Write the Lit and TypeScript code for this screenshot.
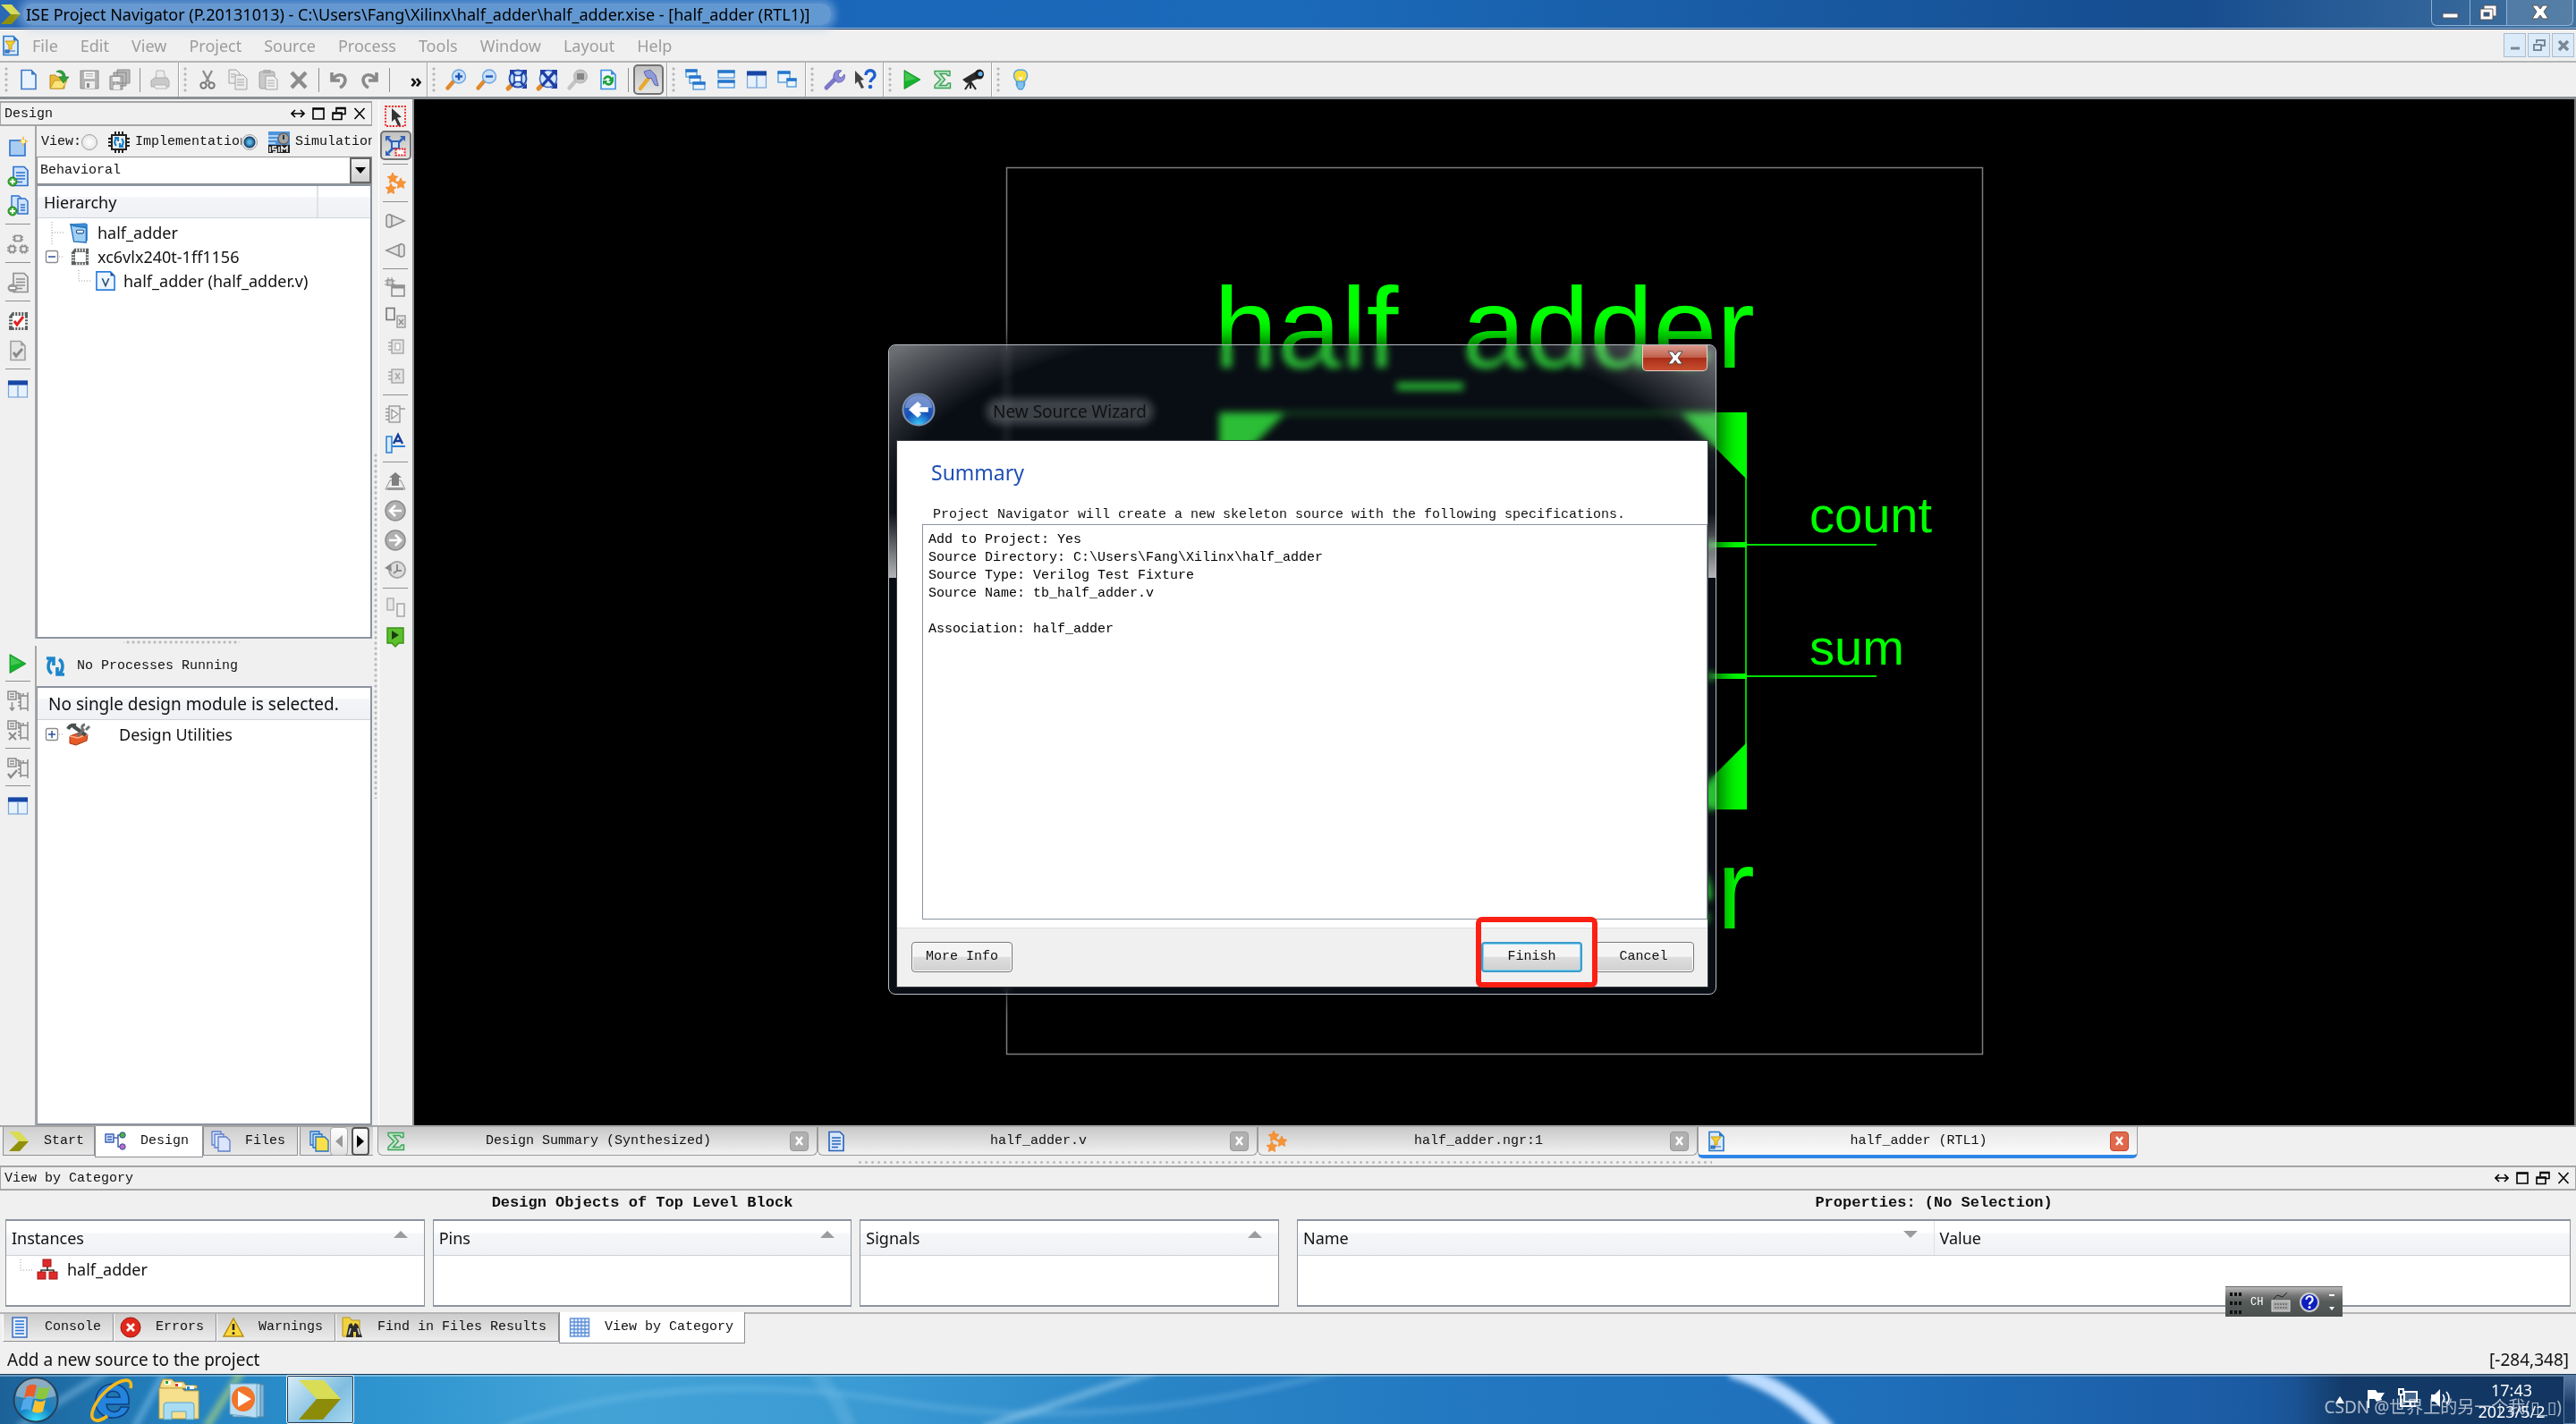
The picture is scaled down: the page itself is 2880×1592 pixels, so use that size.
import { LitElement, html, css, svg, nothing, TemplateResult } from "lit";
import { customElement, property } from "lit/decorators.js";
import { classMap } from "lit/directives/class-map.js";

/* ---------- icon set, drawn on a 24 x 24 grid ---------- */

const page = (stroke: string, fill: string) => svg`
  <path d="M4 1.5h11l5 5v16H4z" fill=${fill} stroke=${stroke} stroke-width="1.6"/>
  <path d="M15 1.5l5 5h-5z" fill=${stroke}/>`;

const lens = (mark: unknown, rim = "#6aa5e4", handle = "#e08a2c", glass = "#c9e0f8") => svg`
  <path d="M2.5 21.5L9 14" stroke=${handle} stroke-width="4.4" stroke-linecap="round"/>
  <circle cx="15" cy="8.5" r="7.5" fill=${glass} stroke=${rim} stroke-width="1.4"/>${mark}`;

const star = (x: number, y: number) => svg`
  <path transform="translate(${x} ${y})" d="M0-6l1.7 3.800 4.200.5-3 2.900.7 4.200L0 3.500-3.600 5.500l.7-4.200L-6-1.500l4.200-.5z" fill="#f79433" stroke="#f0862a" stroke-width=".8"/>`;

const sigma = svg`<path d="M3 2.500h17v5h-2.500L16 5.500H9l5.500 6.500L8.500 18.500H16l2-2.500h2.500v5.500H3v-3L9.500 12 3 5.500z" fill="#bfe6c8" stroke="#3da35a" stroke-width="1.4"/>`;

const chipGrey = svg`
  <g fill="none" stroke="#8a8a8a" stroke-width="1.6">
    <rect x="8.5" y="2.5" width="7" height="6"/><rect x="2.5" y="14.5" width="6" height="6"/><rect x="15.5" y="14.5" width="6" height="6"/>
    <path d="M6 4h2.500M6 7h2.500M15.500 4H18M15.500 7H18M0 16h2.500M0 19h2.500M8.500 16h2M8.500 19h2M13.500 16h2M13.500 19h2M21.500 16H24M21.500 19H24M4 12.500v2M7 12.500v2M17 12.500v2M20 12.500v2M4 20.500v2M7 20.500v2M17 20.500v2M20 20.500v2"/>
  </g>`;

const chipBody = svg`
  <path d="M6 2h17v20H2V7z" fill="#5a5f5f"/>
  <path d="M8.500 2v4M12 2v4M15.500 2v4M19 2v4M8.500 22v-3M12 22v-3M15.500 22v-3M19 22v-3M2 9.500h4M2 13h4M2 16.500h4M23 9.500h-3M23 13h-3M23 16.500h-3" stroke="#fff" stroke-width="1.4"/>`;

const procBlock = (mark: unknown) => svg`
  <g fill="#eee" stroke="#8a8a8a" stroke-width="1.5">
    <rect x="1" y="1" width="9" height="9"/><path d="M3 4h5M3 7h5M10 3h3v6M15 3v19M15 6h8v14h-8zM12 9h3M12 13h3M12 17h3M18 6V3M23 6V2M23 20v3"/>
    ${mark}
  </g>`;

const columns = svg`
  <rect x="1.5" y="3" width="21" height="18" fill="#e6f1fc" stroke="#79a7d8" stroke-width="1.2"/>
  <rect x="1" y="2.5" width="22" height="5" fill="#1747a6"/><path d="M12 7v14" stroke="#79a7d8" stroke-width="1.5"/>`;

const docLines = (c: string, f: string) => svg`
  <path d="M4 1.500h12l4 4v17H4z" fill=${f} stroke=${c} stroke-width="1.6"/>
  <path d="M7 8h10M7 11.500h10M7 15h10M7 18.500h7" stroke=${c} stroke-width="1.7"/>`;

const schematic = svg`
  ${page("#2a78c8", "#dbeafa")}
  <path d="M6 7h11l-4 5v4h-3v-4z" fill="#f4cf2e" stroke="#c89b12" stroke-width="1"/>
  <path d="M6 17h4v3H6zM13 18h4M10 18h3" fill="#3c87d6" stroke="#2a66b0" stroke-width="1.2"/>`;

const brand = svg`<path d="M1 1h12l10 11H12z" fill="#d9dc55"/><path d="M1 23h12l10-11H12z" fill="#8f9009"/>`;

const disk = svg`
  <path d="M2 2h20v20H2z" fill="#b3b3b3" stroke="#8b8b8b"/><rect x="6" y="3" width="12" height="8" fill="#f2f2f2"/>
  <path d="M8 5.500h8M8 8h8" stroke="#aaa"/><rect x="7" y="14" width="11" height="8" fill="#ededed"/><rect x="9" y="16" width="3" height="5" fill="#8b8b8b"/>`;

const windowPane = (x: number, y: number, w: number, h: number) => svg`
  <rect x=${x} y=${y} width=${w} height=${h} fill="#eaf4fd" stroke="#3f8fd8" stroke-width="1.2"/>
  <rect x=${x - 0.6} y=${y - 0.6} width=${w + 1.2} height="3.4" fill="#2676cc"/>`;

const gate = (flip: boolean) => svg`
  <g transform=${flip ? "translate(24 0) scale(-1 1)" : ""} fill="#e4e4e4" stroke="#8f8f8f" stroke-width="1.6">
    <path d="M6 5l16 7-16 7z"/><rect x="2" y="5" width="6" height="14" rx="3"/>
  </g>`;

const roundArrow = (d: string) => svg`
  <circle cx="12" cy="12" r="11" fill="#b0b0b0" stroke="#8c8c8c" stroke-width="1.5"/>
  <path d=${d} fill="none" stroke="#fff" stroke-width="2.6"/>`;

const icons: Record<string, unknown> = {
  brand,
  newDoc: page("#3c78c8", "#e9f3fe"),
  open: svg`<path d="M2 7h6l2 2h8v13H2z" fill="#e9b93a" stroke="#b98a1c"/><path d="M2 22l5-9h14l-5 9z" fill="#fbe37a" stroke="#c79a24"/>
    <path d="M9 3c5-3 10 0 10 6h4l-6 7-5-7h4c0-4-3-5-7-6z" fill="#2fa33a" stroke="#1d7a28" stroke-width=".7"/>`,
  save: disk,
  saveAll: svg`<path d="M9 1h14v15H9zM5 4h14v15H5zM1 8h14v15H1z" fill="#b9b9b9" stroke="#888"/><path d="M4 9h8v5H4z" fill="#eee"/><path d="M5 18h7v5H5z" fill="#eee"/>`,
  print: svg`<path d="M8 2h8l2 9H7z" fill="#ececec" stroke="#b5b5b5"/><path d="M2 13l4-3h14l2 4v6H2z" fill="#c9c9c9" stroke="#adadad"/><path d="M5 18h13l2 4H7z" fill="#efefef" stroke="#b5b5b5"/>`,
  cut: svg`<path d="M7 2l7 13M17 2l-7 13" stroke="#8e8e8e" stroke-width="2.4"/><circle cx="7.5" cy="18.5" r="3.2" fill="none" stroke="#777" stroke-width="2"/><circle cx="16.5" cy="18.5" r="3.2" fill="none" stroke="#777" stroke-width="2"/>`,
  copy: svg`<path d="M2 1h8l4 4v11H2z" fill="#ededed" stroke="#a2a2a2"/><path d="M9 7h9l4 4v12H9z" fill="#ededed" stroke="#a2a2a2"/><path d="M11 12h8M11 15h8M11 18h8M4 6h5M4 9h4" stroke="#a2a2a2"/>`,
  paste: svg`<rect x="2" y="3" width="17" height="19" rx="2" fill="#c9c9c9" stroke="#a2a2a2"/><rect x="6" y="1" width="9" height="4" rx="1" fill="#b0b0b0"/><path d="M9 8h9l4 4v11H9z" fill="#f0f0f0" stroke="#a2a2a2"/><path d="M11 13h8M11 16h8M11 19h8" stroke="#aaa"/>`,
  del: svg`<path d="M4 4l16 17M20 4L4 21" stroke="#8c8c8c" stroke-width="4.4"/>`,
  undo: svg`<path d="M4 4v9h9M5 12c5-8 13-6 14 0 0 4-2 7-6 9" fill="none" stroke="#8a8a8a" stroke-width="3.6"/>`,
  redo: svg`<path d="M20 4v9h-9M19 12c-5-8-13-6-14 0 0 4 2 7 6 9" fill="none" stroke="#8a8a8a" stroke-width="3.6"/>`,
  zoomIn: lens(svg`<path d="M11 8.500h8M15 4.500v8" stroke="#1d55b8" stroke-width="2.4"/>`),
  zoomOut: lens(svg`<path d="M11 8.500h8" stroke="#1d55b8" stroke-width="2.4"/>`),
  zoomFit: svg`<path d="M2 22l5-5" stroke="#e08a2c" stroke-width="5" stroke-linecap="round"/><circle cx="13" cy="11" r="9.500" fill="#bcd8f6" stroke="#2b4fb0" stroke-width="2"/>
    <path d="M6 3l14 16M20 3L6 19" stroke="#1d3fa8" stroke-width="2.6"/><rect x="9" y="7.500" width="8" height="7" fill="#fff" stroke="#1d4bb0" stroke-width="1.600"/><path d="M4 1h6L4 7zM23 1h-6l6 6zM23 22h-6l6-6z" fill="#1d3fa8"/>`,
  zoomSel: svg`<path d="M2 22l5-5" stroke="#e08a2c" stroke-width="5" stroke-linecap="round"/><circle cx="13" cy="11" r="9.500" fill="#d4e6fa" stroke="#3c68c0" stroke-width="1.600"/>
    <path d="M6 3l14 16M20 3L6 19" stroke="#1d3fa8" stroke-width="3.400"/><path d="M4 1h7L4 8zM23 1h-7l7 7zM23 22h-7l7-7z" fill="#1d3fa8"/>`,
  zoomGrey: svg`<path d="M2.500 21.500L9 14" stroke="#c4c4c4" stroke-width="4.400" stroke-linecap="round"/><circle cx="15" cy="8.500" r="7.500" fill="#c4c4c4" stroke="#b0b0b0"/><rect x="11" y="5" width="8" height="7" fill="#858585"/>`,
  refresh: svg`${page("#3c8fe0", "#eef6fe")}<path d="M6 12c2-6 8-6 10-2l2-2v6h-6l2-2c-2-3-4-2-5 0zM18 14c-2 6-8 6-10 2l-2 2v-5h5l-1 2c2 2 4 1 5-1z" fill="#1fa33a"/>`,
  hammer: svg`<path d="M3 22L13 9" stroke="#e8a92a" stroke-width="4.400" stroke-linecap="round"/><path d="M7 3l7-2 6 6 3 12-4-1-4-8-3 1-3-3z" fill="#8e9bd8" stroke="#5c66a8"/>`,
  cascade: svg`${windowPane(1, 1, 12, 8)}${windowPane(5, 8, 12, 8)}${windowPane(9, 15, 13, 8)}`,
  tileH: svg`${windowPane(3, 2, 18, 8)}${windowPane(3, 13, 18, 8)}`,
  tileV: columns,
  floatWin: svg`${windowPane(2, 3, 13, 12)}${windowPane(12, 11, 10, 9)}`,
  wrench: svg`<path d="M3 21l10-10" stroke="#7b78c8" stroke-width="5" stroke-linecap="round"/><path d="M11 10c-1-6 4-10 9-8l-4 4 1 3 3 1 3-4c2 6-3 10-8 9z" fill="#8f8cd8" stroke="#5d5ab0" stroke-width=".8"/>`,
  help: svg`<path d="M1 2l10 10-4 1 4 8-3 1-4-8-3 3z" fill="#444"/><path d="M13 7c0-7 10-7 10 0 0 4-5 4-5 8" fill="none" stroke="#1d5fd0" stroke-width="3.400"/><circle cx="18" cy="20" r="2.300" fill="#1d5fd0"/>`,
  play: svg`<path d="M3 1.500l18 10.500L3 22.500z" fill="#16b32c" stroke="#0d8a1e" stroke-width=".8"/><path d="M4 3.500l12 7.500-12 3z" fill="#6fdc7a" opacity=".5"/>`,
  sigma,
  telescope: svg`<path d="M0 12L15 3l5 7-15 6z" fill="#2a2a2a"/><ellipse cx="19" cy="6" rx="5" ry="5.500" fill="#1c1c1c"/><circle cx="20" cy="5.500" r="2.600" fill="#62b5e8"/><path d="M9 13v9M9 14L3 23M9 14l6 9" stroke="#2a2a2a" stroke-width="2.200"/>`,
  bulb: svg`<path d="M12 1c9 0 9 8 4.500 13v4h-9v-4C3 9 3 1 12 1z" fill="#fbdd3c" stroke="#5aa7e0" stroke-width="1.500"/><path d="M8 14h8v6l-2 3h-4l-2-3z" fill="#7fc2ee" stroke="#3f8fd0"/><path d="M10 9l2 3 2-3" fill="none" stroke="#fff" stroke-width="1.500"/>`,
  newSource: svg`<rect x="3" y="5" width="17" height="17" fill="#a8cdf3" stroke="#2f74cf" stroke-width="1.600"/><path d="M18 0l1.500 4.500L24 6l-4.500 1.500L18 12l-1.500-4.500L12 6l4.500-1.500z" fill="#f7a928"/><circle cx="18" cy="6" r="2.500" fill="#fff2a0"/>`,
  addSource: svg`<g transform="translate(3 0)">${docLines("#2a70cf", "#cfe3fa")}</g><circle cx="6" cy="18" r="5" fill="#3fae3a" stroke="#277e24"/><path d="M3 18h6M6 15v6" stroke="#fff" stroke-width="2"/>`,
  addCopy: svg`<path d="M5 1h8l3 3v14H5z" fill="#cfe3fa" stroke="#2a70cf" stroke-width="1.400"/><path d="M12 4h8l3 3v14H12z" fill="#cfe3fa" stroke="#2a70cf" stroke-width="1.400"/><path d="M15 11h5M15 14h5M15 17h5" stroke="#2a70cf" stroke-width="1.500"/><circle cx="6" cy="18" r="5" fill="#3fae3a" stroke="#277e24"/><path d="M3 18h6M6 15v6" stroke="#fff" stroke-width="2"/>`,
  chipGrey,
  removeSource: svg`<g transform="translate(3 0)">${docLines("#8e8e8e", "#e9e9e9")}</g><ellipse cx="6" cy="18" rx="5.500" ry="4.500" fill="#9a9a9a"/><path d="M3 18h6" stroke="#fff" stroke-width="2"/>`,
  chipCheck: svg`${chipBody}<rect x="6" y="6" width="14" height="13" fill="#fff"/><path d="M8 12l3 4 7-9" fill="none" stroke="#e02222" stroke-width="3"/>`,
  chip: svg`${chipBody}<rect x="6.500" y="6.500" width="13" height="12" fill="#fff"/>`,
  docCheck: svg`${page("#a0a0a0", "#e6e6e6")}<path d="M7 14l3 4 7-8" fill="none" stroke="#8a8a8a" stroke-width="3"/>`,
  columns,
  procRun: procBlock(svg`<path d="M5.500 13v9M3 19l2.500 3L8 19" fill="none"/>`),
  procStop: procBlock(svg`<path d="M2 14l8 8M10 14l-8 8" fill="none" stroke-width="2"/>`),
  procCheck: procBlock(svg`<path d="M1 18l3 4 7-8" fill="none" stroke-width="2.400"/>`),
  chipCycle: svg`<rect x="4" y="4" width="16" height="16" fill="#f2f2f2" stroke="#222" stroke-width="2"/><path d="M8 0v4M12 0v4M16 0v4M8 20v4M12 20v4M16 20v4M0 8h4M0 12h4M0 16h4M20 8h4M20 12h4M20 16h4" stroke="#222" stroke-width="2"/><path d="M11 7c-4 1-5 6-2 9M13 17c4-1 5-6 2-9M7 7h4v4M17 17h-4v-4" fill="none" stroke="#1b82c8" stroke-width="2.200"/>`,
  isim: svg`<rect width="24" height="24" fill="#4e95dc"/><path d="M0 5h13M0 9h10M0 13h8" stroke="#cfe4fa" stroke-width="1.500"/><circle cx="17" cy="8" r="6" fill="#a5a5a5" stroke="#666" stroke-width="1.500"/><path d="M17 4v5" stroke="#333" stroke-width="2"/><rect y="15" width="24" height="9" fill="#222"/><path d="M2 17v6M9 17H5v3h4v3H5M12 17v6M15 23v-6l3 3 3-3v6" fill="none" stroke="#fff" stroke-width="1.500"/>`,
  cycle: svg`<path d="M10 3c-7 2-8 13-2 17M2 3h8v8M14 21c7-2 8-13 2-17M22 21h-8v-8" fill="none" stroke="#1d86cc" stroke-width="3.600"/>`,
  folder: svg`<path d="M1 2l18-1 2 1v20l-3 2z" fill="#3f8fd6" stroke="#1f6db8"/><path d="M1 2l4 21 15 1V6L5 4z" fill="#9fd0f4" stroke="#1f6db8" stroke-width="1.400"/><rect x="8" y="9" width="9" height="4" rx="2" fill="#fff" stroke="#1f4f98" stroke-width="1.300"/>`,
  verilog: svg`<path d="M1 1h17l5 5v17H1z" fill="#eef6ff" stroke="#2d7fe0" stroke-width="1.800"/><path d="M18 1l5 5h-5z" fill="#1b50a0"/><path d="M8 9l4 9 4-9" fill="none" stroke="#2a4f78" stroke-width="1.800"/>`,
  toolbox: svg`<path d="M2 14l11-4 9 2-1 7-12 5-7-2z" fill="#e85a28" stroke="#a83414"/><path d="M2 14l9 2 11-4" fill="none" stroke="#ffb08a" stroke-width="1.500"/><path d="M6 3l14 10M0 6c2-4 5-5 9-4" stroke="#4a4f4f" stroke-width="4" fill="none"/><path d="M19 1c-4 1-4 4-2 6l-6 7M24 3l-4 4" fill="none" stroke="#6b7070" stroke-width="3"/>`,
  pointer: svg`<rect x="1" y="1" width="22" height="22" fill="none" stroke="#e22" stroke-width="1.800" stroke-dasharray="2 1.500"/><path d="M8 3l11 10-5 .5 4 8-3 1.500-3.500-8L8 18z" fill="#333"/>`,
  fitTool: svg`<path d="M4 4l16 15M20 4L4 20" stroke="#2f62b8" stroke-width="2.600"/><rect x="8" y="7" width="8" height="8" fill="#c8dcf2" stroke="#2f62b8" stroke-width="2"/><path d="M1 1h6L1 7zM23 1h-6l6 6zM1 23h6l-6-6z" fill="#2f62b8"/><rect x="12.500" y="15.500" width="10" height="7" fill="#fff" stroke="#e22" stroke-width="2" stroke-dasharray="2 1.200"/>`,
  stars: svg`${star(9, 6)}${star(18, 12)}${star(7, 18)}`,
  gateR: gate(false),
  gateL: gate(true),
  hierUp: svg`<rect x="8" y="9" width="14" height="12" fill="#eee" stroke="#8f8f8f" stroke-width="1.600"/><path d="M8 11h14" stroke="#8f8f8f" stroke-width="3"/><rect x="3" y="3" width="6" height="6" fill="#ccc" stroke="#8f8f8f" stroke-width="1.400"/><path d="M0 4h3M0 8h3M9 4h3M9 8h3M4 0v3M8 0v3" stroke="#8f8f8f"/>`,
  pair: svg`<rect x="2" y="1.500" width="9" height="13" fill="#eee" stroke="#777" stroke-width="1.600"/><rect x="14" y="10" width="9" height="13" fill="#e2e2e2" stroke="#9a9a9a" stroke-width="1.400"/><path d="M16 14l5 6M21 14l-5 6" stroke="#8a8a8a" stroke-width="1.300"/>`,
  pins: svg`<rect x="8" y="4" width="13" height="15" fill="#e4e4e4" stroke="#a5a5a5" stroke-width="1.400"/><path d="M4 7h4M4 11h4M4 15h4" stroke="#a5a5a5" stroke-width="1.400"/><rect x="12" y="8" width="5" height="7" fill="#fff" stroke="#a5a5a5"/>`,
  pinsX: svg`<rect x="8" y="4" width="13" height="15" fill="#e4e4e4" stroke="#a5a5a5" stroke-width="1.400"/><path d="M4 7h4M4 11h4M4 15h4M12 8l5 7M17 8l-5 7" stroke="#a5a5a5" stroke-width="1.400"/>`,
  buffer: svg`<rect x="5" y="3" width="12" height="18" fill="#eee" stroke="#999" stroke-width="1.400"/><path d="M8 7v10l7-5zM1 6h4M1 10h4M1 14h4M1 18h4M17 6h6" fill="#fff" stroke="#999" stroke-width="1.300"/>`,
  label: svg`<rect x="2" y="4" width="6" height="18" fill="#d8ecfb" stroke="#2b7fd4" stroke-width="1.500"/><path d="M8 15h15" stroke="#2b7fd4" stroke-width="2"/><path d="M10 12l5-10 5 10M12 9h6" fill="none" stroke="#173d9c" stroke-width="2.400"/>`,
  push: svg`<path d="M6 11l-5 10h22l-5-10z" fill="#eee" stroke="#8f8f8f"/><path d="M3 19h18v3H3z" fill="#999"/><path d="M12 2l7 6h-3v9H8V8H5z" fill="#7f7f7f"/>`,
  back: roundArrow("M19 12H7M12 6l-6 6 6 6"),
  forward: roundArrow("M5 12h12M12 6l6 6-6 6"),
  history: svg`<circle cx="14" cy="12" r="9" fill="#ddd" stroke="#a5a5a5" stroke-width="2"/><path d="M14 6v7h5M14 13l-4 3" fill="none" stroke="#8a8a8a" stroke-width="2"/><path d="M0 10l7-5 1 9z" fill="#8a8a8a"/>`,
  twoPages: svg`<rect x="3" y="2" width="7" height="13" fill="#e8e8e8" stroke="#b0b0b0" stroke-width="1.500"/><rect x="14" y="8" width="8" height="14" fill="#f2f2f2" stroke="#a5a5a5" stroke-width="1.500"/>`,
  runTag: svg`<path d="M3 2h18v17h-5l-4 4-4-4H3z" fill="#5cbf2c" stroke="#3a8f18" stroke-width="1.400"/><path d="M8 5l8 5-8 5z" fill="#1c3c10"/>`,
  designTab: svg`<rect x="1" y="4" width="9" height="9" fill="#cfe0f8" stroke="#3f63b8" stroke-width="1.500"/><path d="M3 7h5M3 10h5M10 8h5v10h3M15 8V5h3" fill="none" stroke="#3f63b8" stroke-width="1.500"/><circle cx="20" cy="5" r="3.200" fill="#4faf4a" stroke="#2b4f98"/><circle cx="20" cy="18" r="3.200" fill="#c06ac8" stroke="#2b4f98"/>`,
  files: svg`<g fill="#dbe5fb" stroke="#5f7fcc" stroke-width="1.300"><path d="M2 1h10v15H2z"/><path d="M5 4h10v15H5z"/><path d="M9 7h9l4 4v12H9z"/></g>`,
  library: svg`<g stroke="#2a6fc0" stroke-width="1.300"><path d="M2 1h10v15H2z" fill="#bfe0fa"/><path d="M5 4h10v15H5z" fill="#bfe0fa"/><path d="M8 7h10l4 4v12H8z" fill="#fbe04a"/></g>`,
  doc: docLines("#2a62b8", "#d8e8fb"),
  schematic,
  console: svg`<rect x="4" y="1" width="16" height="22" fill="#e6f0fc" stroke="#3b6fc0" stroke-width="1.500"/><path d="M7 5h10M7 8.500h10M7 12h10M7 15.500h10M7 19h10" stroke="#2a70cf" stroke-width="1.700"/>`,
  error: svg`<circle cx="12" cy="12" r="11" fill="#e0281c" stroke="#a31710"/><path d="M8 8l8 8M16 8l-8 8" stroke="#fff" stroke-width="2.800"/>`,
  warning: svg`<path d="M12 2l11 20H1z" fill="#fbd83a" stroke="#b98f16" stroke-width="1.500"/><path d="M12 8v7" stroke="#222" stroke-width="2.600"/><circle cx="12" cy="18.500" r="1.500" fill="#222"/>`,
  find: svg`<path d="M1 1h8l2 3h9v18H1z" fill="#f1d23f" stroke="#b7941b"/><path d="M8 9l3-2 2 4 2-4 3 2 5 14h-7v-6h-3v6H5z" fill="#2c2c2c"/><path d="M8 20l2-7M20 20l-2-7" stroke="#dfe4e4" stroke-width="1.500"/>`,
  grid: svg`<rect x="1.500" y="2" width="21" height="20" fill="#e8f1fc" stroke="#5c8fd8" stroke-width="1.400"/><path d="M6 2v20M10 2v20M14 2v20M18 2v20M2 6h20M2 10h20M2 14h20M2 18h20" stroke="#5c8fd8" stroke-width="1.300"/>`,
  instance: svg`<path d="M12 7v7M5 17v-4h14v4" fill="none" stroke="#333" stroke-width="1.600"/><rect x="7" y="1" width="9" height="8" fill="#e02a2a" stroke="#a81818"/><rect x="1" y="15" width="9" height="8" fill="#e02a2a" stroke="#a81818"/><rect x="14" y="15" width="9" height="8" fill="#e02a2a" stroke="#a81818"/>`,
  flag: svg`<path d="M4 3v20" stroke="#fff" stroke-width="2"/><path d="M5 3h7l2 3h8l-4 6 1 2-6 2-2-3H5z" fill="#fff"/>`,
  network: svg`<path d="M8 5h14v11H8z" fill="#46658c" stroke="#fff" stroke-width="2"/><path d="M2 2h5v6H2zM4 8v13h8M15 16v4M10 21h11" fill="none" stroke="#fff" stroke-width="2"/>`,
  speaker: svg`<path d="M2 8h4l6-6v20l-6-6H2z" fill="#fff"/><path d="M15 8c2 2 2 6 0 8M19 5c4 4 4 10 0 14" fill="none" stroke="#fff" stroke-width="1.600"/>`,
};

const ico = (name: string, size = 24) =>
  html`<svg class="ico" width=${size} height=${size} viewBox="0 0 24 24" aria-hidden="true">${icons[name]}</svg>`;

/* ---------- shared styles ---------- */

const base = css`
  :host, * { box-sizing: border-box; }
  button, input, select, textarea { font: inherit; color: inherit; margin: 0; }
  button { border: 0; background: none; padding: 0; }
  .ico { display: block; flex: none; overflow: visible; }
  .mono { font: 15px/20px "Liberation Mono", monospace; }
  .ui { font: 18px/26px "Noto Sans", sans-serif; }
  .large { font-size: 19px; }
  .tool { width: 34px; height: 34px; display: grid; place-items: center; flex: none; border-radius: 5px; }
  .tool.on { background: linear-gradient(#c2c2c2, #e4e4e4); border: 2px solid #737373; }
`;

/* ---------- dock caption (auto-hide, maximise, float, close) ---------- */

@customElement("dock-caption")
class DockCaption extends LitElement {
  @property() caption = "";
  static styles = [base, css`
    :host { display: flex; align-items: center; height: 28px; border: 1px solid #a5a5a5; border-width: 2px 1px; padding: 0 2px 0 4px; background: #f0f0f0; flex: none; }
    .mono { flex: 1; padding-top: 2px; }
    button { width: 23px; display: grid; place-items: center; }
  `];
  render() {
    const glyph = (label: string, d: string) => html`<button aria-label=${label}>
      <svg width="16" height="16" viewBox="0 0 16 16" fill="none" stroke="#000" stroke-width="1.600"><path d=${d}/></svg></button>`;
    return html`<span class="mono">${this.caption}</span>
      ${glyph("Slide", "M1 8h14M5 4L1 8l4 4M11 4l4 4-4 4")}
      ${glyph("Maximize", "M2 2h12v12H2zM2 3h12")}
      ${glyph("Float", "M5 6V1.500h10v7h-4M1 7h10v7.500H1zM1 8h10M5 2.500h10")}
      ${glyph("Close", "M2.500 2l11 12M13.500 2l-11 12")}`;
  }
}

/* ---------- top: title, menu and toolbars ---------- */

@customElement("app-header")
class AppHeader extends LitElement {
  static styles = [base, css`
    :host { display: block; flex: none; }
    .title { height: 33px; display: flex; align-items: center; gap: 2px; border-bottom: 1px solid #1b355c; box-shadow: inset 0 -1px #9cc4ea;
      background: linear-gradient(90deg, #2a67b4, #1a63b8 20%, #1b6aba 50%, #164d8f 85%, #41719f); }
    .title h1 { margin: 0; font-weight: 400; color: #000; padding: 0 24px 0 3px; line-height: 24px; border-radius: 10px; background: rgba(158, 194, 230, .55); box-shadow: 0 0 9px 5px rgba(158, 194, 230, .5); white-space: nowrap; }
    .sys { margin-left: auto; align-self: flex-start; display: flex; height: 29px; margin-right: 3px; border: 1px solid #8fb2d8; border-top: 0; border-radius: 0 0 6px 6px; }
    .sys button { display: grid; place-items: center; width: 43px; border-right: 1px solid #8fb2d8; }
    .sys button:nth-child(2) { width: 41px; }
    .sys button:last-child { border: 0; width: 73px; background: rgba(150, 170, 190, .25); }
    nav { height: 37px; display: flex; align-items: center; background: #f0f0f0; border-bottom: 2px solid #b5b5b5; }
    nav .menu { color: #9c9c9c; margin-left: 25px; }
    nav .ico + .menu { margin-left: 12px; }
    .mdi { margin-left: auto; display: flex; gap: 2px; padding-right: 2px; }
    .mdi button { width: 25px; height: 27px; border: 1px solid #a8bccf; background: #dcebf9; display: grid; place-items: center; }
    .bars { height: 41px; display: flex; background: #f0f0f0; border-bottom: 3px solid #8c8f92; }
    .bar { display: flex; align-items: center; padding: 0 3px 0 0; border-right: 1px solid #a5a5a5; box-shadow: 1px 0 #fff; }
    .bar:last-child { border: 0; box-shadow: none; }
    .grip { width: 15px; height: 30px; background: radial-gradient(circle at 7px 3px, #b5b5b5 1px, transparent 2px) 0 0 / 15px 6px; flex: none; }
    .sep { width: 1px; height: 27px; background: #8f8f8f; margin: 0 5px; }
    .more { width: 33px; text-align: right; padding-right: 2px; font: bold 22px/26px "Noto Sans", sans-serif; }
  `];
  render() {
    const groups: string[][] = [
      ["newDoc", "open", "save", "saveAll", "|", "print"],
      ["cut", "copy", "paste", "del", "|", "undo", "redo", "|", ">>"],
      ["zoomIn", "zoomOut", "zoomFit", "zoomSel", "zoomGrey", "refresh", "|", "hammer"],
      ["cascade", "tileH", "tileV", "floatWin"],
      ["wrench", "help"],
      ["play", "sigma", "telescope"],
      ["bulb"],
    ];
    return html`
      <header class="title">${ico("brand")}
        <h1 class="ui">ISE Project Navigator (P.20131013) - C:\\Users\\Fang\\Xilinx\\half_adder\\half_adder.xise - [half_adder (RTL1)]</h1>
        <div class="sys">
          <button aria-label="Minimize"><svg width="20" height="20"><rect x="1" y="11" width="17" height="5" fill="#fff" stroke="#555"/></svg></button>
          <button aria-label="Restore"><svg width="20" height="20"><path d="M5 2h14v12H5z" fill="#fff" stroke="#555"/><path d="M1 6h14v12H1z" fill="#fff" stroke="#555"/><rect x="5" y="10" width="6" height="4" fill="#2d5c98" stroke="#555"/></svg></button>
          <button aria-label="Close"><svg width="20" height="20"><path d="M1 2h6l3 4 3-4h6l-5 7 5 8h-6l-3-4-3 4H1l5-8z" fill="#fff" stroke="#555"/></svg></button>
        </div>
      </header>
      <nav>${ico("schematic")}
        ${["File", "Edit", "View", "Project", "Source", "Process", "Tools", "Window", "Layout", "Help"].map((m) => html`<button class="menu ui">${m}</button>`)}
        <div class="mdi">
          <button aria-label="Minimize document"><svg width="16" height="16"><path d="M3 11h10" stroke="#7a8896" stroke-width="3"/></svg></button>
          <button aria-label="Restore document"><svg width="16" height="16" fill="none" stroke="#7a8896" stroke-width="2"><path d="M5 5V2h9v6h-3M2 7h8v6H2z"/></svg></button>
          <button aria-label="Close document"><svg width="16" height="16"><path d="M3 3l10 10M13 3L3 13" stroke="#7a8896" stroke-width="3.500"/></svg></button>
        </div>
      </nav>
      <div class="bars">${groups.map((g) => html`<div class="bar"><span class="grip"></span>${g.map((n) =>
        n === "|" ? html`<span class="sep"></span>`
        : n === ">>" ? html`<button class="more" aria-label="More tools">»</button>`
        : html`<button class=${classMap({ tool: true, on: n === "hammer" })} aria-label=${n}>${ico(n)}</button>`)}</div>`)}
      </div>`;
  }
}

/* ---------- left: design panel ---------- */

@customElement("design-panel")
class DesignPanel extends LitElement {
  static styles = [base, css`
    :host { display: flex; flex-direction: column; width: 416px; flex: none; padding-top: 2px; }
    .pane { display: flex; min-height: 0; }
    .upper { flex: 572 1 0; }
    .lower { flex: 535 1 0; }
    .strip { width: 41px; flex: none; border-right: 2px solid #a5a5a5; display: flex; flex-direction: column; align-items: center; padding-top: 6px; }
    .lower .strip { padding-top: 3px; }
    .strip .tool { width: 33px; height: 33px; }
    .sep { width: 28px; height: 1px; background: #8f8f8f; margin: 4px 0 5px; }
    .lower .sep { margin: 3px 0 5px; }
    .col { flex: 1; min-width: 0; display: flex; flex-direction: column; }
    .view { height: 34px; display: flex; align-items: center; padding: 2px 0 0 5px; overflow: hidden; }
    .view label { display: flex; align-items: center; overflow: hidden; flex: none; }
    .view .ico { margin: 0 6px 0 12px; }
    .view .impl { width: 119px; overflow: hidden; }
    .view input { appearance: none; width: 18px; height: 18px; flex: none; border: 1px solid #a0a0a0; border-radius: 50%; background: radial-gradient(#fff, #ddd); }
    .view input:checked { background: radial-gradient(circle, #59b4e0 0 2px, #12406e 6px, #eee 7px); }
    .combo { display: grid; height: 31px; border: 1px solid #8f9296; background: #fff; }
    .combo > * { grid-area: 1 / 1; }
    .combo select { appearance: none; border: 0; background: none; padding: 0 3px; }
    .combo .drop { justify-self: end; width: 24px; border: 2px solid #666; background: linear-gradient(#f4f4f4, #cfcfcf); display: grid; place-items: center; pointer-events: none; }
    .tree { flex: 1; border: 2px solid #8c94a0; border-left-width: 1px; background: #fff; min-height: 0; }
    .th { height: 36px; display: flex; align-items: center; padding-left: 7px; background: linear-gradient(#fff 35%, #f3f5f8 36%, #eff1f4); border-bottom: 1px solid #cfd3d8; }
    .th i { margin-left: auto; width: 60px; height: 100%; border-left: 2px solid #dfe2e6; }
    .lower .th { padding-left: 12px; }
    ul { list-style: none; margin: 0; padding: 2px 0; }
    li { display: flex; align-items: center; height: 27px; }
    li .ico { width: 22px; margin-right: 9px; }
    li .twig { width: 36px; height: 27px; flex: none; }
    li.deep .twig { width: 65px; }
    li.util .ico { width: 24px; margin-right: 33px; margin-left: -2px; }
    .split { height: 8px; flex: none; background: radial-gradient(circle, #b9b9b9 1px, transparent 2px) center / 6px 8px repeat-x; margin: 0 148px 0 138px; }
    .status { height: 45px; display: flex; align-items: center; gap: 12px; padding-left: 9px; }
    .tabs { display: flex; height: 45px; align-items: flex-start; padding-left: 3px; border-top: 2px solid #a5a5a5; }
    .tab { height: 32px; display: flex; align-items: center; background: linear-gradient(#cfcfcf, #e8e8e8); border: 1px solid #8c8f94; border-top: 0; padding: 0 11px 0 5px; gap: 16px; flex: none; }
    .tab.on { background: #fff; height: 35px; padding: 0 15px 0 10px; gap: 16px; margin-top: -1px; }
    .tab.files { padding: 0 13px 0 7px; gap: 15px; }
    .tab.cut { flex: 1; padding: 0 0 0 9px; margin-left: 2px; min-width: 0; overflow: hidden; border-right: 0; }
    .arrows { display: flex; margin: 0 3px 0 -48px; gap: 4px; position: relative; }
    .arrows button { width: 20px; height: 32px; border: 1px solid #aaa; border-radius: 4px; background: linear-gradient(#fff, #e0e0e0); display: grid; place-items: center; }
    .arrows button + button { border-color: #555; border-width: 2px; }
  `];
  private tools(list: string[]) {
    return list.map((n) => n === "|" ? html`<span class="sep"></span>` : html`<button class="tool" aria-label=${n}>${ico(n)}</button>`);
  }
  private box(plus: boolean) {
    return svg`<rect x="9.500" y="7.500" width="13" height="13" rx="2" fill="#fff" stroke="#8d8d8d" stroke-width="1.400"/><path d=${plus ? "M12 14h8M16 10v8" : "M12 14h8"} stroke="#2b4f98" stroke-width="1.500"/><path d="M24 14h6" stroke="#999" stroke-dasharray="1 2"/>`;
  }
  render() {
    return html`
      <dock-caption caption="Design"></dock-caption>
      <section class="pane upper">
        <div class="strip">${this.tools(["newSource", "addSource", "addCopy", "|", "chipGrey", "|", "removeSource", "|", "chipCheck", "docCheck", "|", "columns"])}</div>
        <div class="col">
          <div class="view mono"><span>View:</span>
            <label><input type="radio" name="view">${ico("chipCycle")}<span class="impl">Implementation</span></label>
            <label><input type="radio" name="view" checked>${ico("isim")}<span>Simulation</span></label>
          </div>
          <div class="combo mono">
            <select aria-label="Simulation view"><option>Behavioral</option></select>
            <span class="drop"><svg width="12" height="7"><path d="M0 0h12L6 7z"/></svg></span>
          </div>
          <div class="tree ui">
            <div class="th">Hierarchy<i></i></div>
            <ul>
              <li><svg class="twig" viewBox="0 0 36 27"><path d="M16 2v25M16 14h13" stroke="#999" stroke-dasharray="1 2" fill="none"/></svg>${ico("folder")}half_adder</li>
              <li><svg class="twig" viewBox="0 0 36 27">${this.box(false)}</svg>${ico("chip")}xc6vlx240t-1ff1156</li>
              <li class="deep"><svg class="twig" viewBox="0 0 65 27"><path d="M46 2v12h13" stroke="#999" stroke-dasharray="1 2" fill="none"/></svg>${ico("verilog")}half_adder (half_adder.v)</li>
            </ul>
          </div>
        </div>
      </section>
      <div class="split"></div>
      <section class="pane lower">
        <div class="strip">${this.tools(["play", "|", "procRun", "procStop", "|", "procCheck", "|", "columns"])}</div>
        <div class="col">
          <div class="status mono">${ico("cycle")}<span>No Processes Running</span></div>
          <div class="tree ui">
            <div class="th large">No single design module is selected.</div>
            <ul><li class="util"><svg class="twig" viewBox="0 0 36 27">${this.box(true)}</svg>${ico("toolbox")}Design Utilities</li></ul>
          </div>
        </div>
      </section>
      <div class="tabs mono">
        <button class="tab">${ico("brand")}Start</button>
        <button class="tab on">${ico("designTab")}Design</button>
        <button class="tab files">${ico("files")}Files</button>
        <button class="tab cut" aria-label="Libraries">${ico("library")}</button>
        <div class="arrows">
          <button aria-label="Scroll left"><svg width="8" height="14"><path d="M8 0v14L0 7z" fill="#999"/></svg></button>
          <button aria-label="Scroll right"><svg width="8" height="14"><path d="M0 0v14l8-7z"/></svg></button>
        </div>
      </div>`;
  }
}

/* ---------- schematic workspace ---------- */

@customElement("schematic-view")
class SchematicView extends LitElement {
  static styles = [base, css`
    :host { flex: 1; min-width: 0; display: flex; flex-direction: column; }
    .work { flex: 1; display: flex; min-height: 0; }
    .gutter { width: 7px; flex: none; background: radial-gradient(circle, #b9b9b9 1px, transparent 2px) center 395px / 6px 6px repeat-y; clip-path: inset(395px 0 365px 0); }
    .vbar { width: 40px; flex: none; display: flex; flex-direction: column; align-items: center; border-right: 2px solid #8c8f92; box-shadow: inset 1px 0 #fff; padding-top: 2px; }
    .vbar .tool { height: 33px; width: 35px; }
    .sep { width: 28px; height: 1px; background: #8f8f8f; margin: 4px 0 4px; flex: none; }
    .canvas { flex: 1; min-width: 0; background: #000; display: grid; place-content: center; overflow: hidden; border-right: 2px solid #777; padding-bottom: 3px; }
    .canvas svg { display: block; overflow: visible; font-family: "Liberation Sans", Arial, sans-serif; }
    .tabs { display: flex; height: 38px; align-items: flex-start; padding-left: 6px; border-top: 2px solid #a5a5a5; }
    .dots { height: 7px; width: 956px; margin-left: 542px; background: radial-gradient(circle, #bdbdbd 1px, transparent 2px) 0 0 / 7px 7px repeat-x; }
    .tab { width: 492px; height: 32px; display: flex; align-items: center; border: 1px solid #9a9a9a; border-top: 0; border-radius: 0 0 6px 6px; background: linear-gradient(#c8c8c8, #f2f2f2); padding: 0 9px 0 8px; }
    .tab span { flex: 1; text-align: center; }
    .tab b { width: 21px; height: 22px; border-radius: 4px; background: #b0b0b0; border: 1px solid #999; display: grid; place-items: center; }
    .tab.on { height: 35px; background: linear-gradient(#e8e8e8, #fafafa); border-bottom: 4px solid #2f86e6; }
    .tab.on b { background: #e0694c; border-color: #c8452c; }
  `];
  render() {
    const tools = ["pointer", "fitTool", "|", "stars", "|", "gateR", "gateL", "|", "hierUp", "pair", "pins", "pinsX", "|", "buffer", "label", "|", "push", "back", "forward", "history", "|", "twoPages", "runTag"];
    const tabs = [["sigma", "Design Summary (Synthesized)"], ["doc", "half_adder.v"], ["stars", "half_adder.ngr:1"], ["schematic", "half_adder (RTL1)"]];
    return html`
      <div class="work">
        <div class="gutter"></div>
        <div class="vbar">${tools.map((n) => n === "|" ? html`<span class="sep"></span>` : html`<button class=${classMap({ tool: true, on: n === "fitTool" })} aria-label=${n}>${ico(n)}</button>`)}</div>
        <div class="canvas">
          <svg width="1092" height="992" viewBox="0 0 1092 992" fill="#0f0">
            <rect x=".5" y=".5" width="1091" height="991" fill="none" stroke="#7c7c7c" stroke-width="1.500"/>
            <text x="232" y="224" font-size="128">half_adder</text>
            <text x="232" y="851" font-size="128">half_adder</text>
            <rect x="239" y="275" width="588" height="442" fill="none" stroke="#0c0" stroke-width="2"/>
            <path d="M238 274h75l-75 75zM828 274h-75l75 75zM828 718h-75l75-75zM238 718h75l-75-75z"/>
            <path d="M780 422h48M780 569h48" stroke="#0f0" stroke-width="6"/>
            <path d="M828 422h145M828 569h145" stroke="#0d0" stroke-width="2"/>
            <text x="898" y="408" font-size="56">count</text>
            <text x="898" y="556" font-size="56">sum</text>
          </svg>
        </div>
      </div>
      <div class="tabs mono">${tabs.map(([icon, text], i) => html`<button class=${classMap({ tab: true, on: i === 3 })}>${ico(icon)}<span>${text}</span>
        <b><svg width="11" height="11"><path d="M2 1l7 9M9 1L2 10" stroke="#fff" stroke-width="2.500"/></svg></b></button>`)}</div>
      <div class="dots"></div>`;
  }
}

/* ---------- wizard dialog ---------- */

@customElement("source-wizard")
class SourceWizard extends LitElement {
  static styles = [base, css`
    :host { position: absolute; left: 993px; top: 385px; width: 926px; display: flex; flex-direction: column; padding: 0 9px 8px; border: 1px solid #b9bec4; border-radius: 8px;
      background: rgba(36, 52, 80, .25); backdrop-filter: blur(4px) saturate(.75); box-shadow: 0 0 26px 4px rgba(0, 0, 0, .75); overflow: hidden; }
    .sheen { position: absolute; inset: 0 0 auto 0; height: 260px; pointer-events: none;
      background: linear-gradient(transparent 72%, rgba(255, 255, 255, .65)), radial-gradient(471px 208px at 50% 175px, transparent 96%, rgba(255, 255, 255, .4) 126%); }
    .close { align-self: flex-end; width: 73px; height: 29px; border: 1px solid #e6d0cb; border-top: 0; border-radius: 0 0 5px 5px; background: linear-gradient(#d99a8c, #c2614e 48%, #a92c16 50%, #c84f30); display: grid; place-items: center; position: relative; }
    .head { height: 78px; padding: 12px 0 0 5px; display: flex; align-items: center; gap: 61px; position: relative; }
    .head h2 { margin: 0; font-weight: 400; color: #111; border-radius: 12px; background: rgba(140, 145, 150, .4); box-shadow: 0 0 8px 5px rgba(140, 145, 150, .4); line-height: 20px; padding: 0 3px; }
    .body { background: #fff; outline: 1px solid #3a3f45; position: relative; }
    h3 { margin: 0; padding: 20px 38px 23px; font: 23px/30px "Noto Sans", sans-serif; color: #1f4fb4; }
    label { display: block; padding-left: 40px; }
    textarea { display: block; width: calc(100% - 28px); height: 442px; margin-left: 28px; border: 1px solid #8c94a0; resize: none; padding: 7px 6px; font: 15px/20px "Liberation Mono", monospace; color: #000; outline: 0; }
    .foot { margin-top: 9px; height: 66px; background: #f0f0f0; border-top: 1px solid #dcdcdc; display: flex; gap: 12px; padding: 15px 15px 0 16px; }
    .foot button { width: 113px; height: 34px; border: 1px solid #777; border-radius: 4px; background: linear-gradient(#f4f4f4 48%, #dedede 50%, #d0d0d0); box-shadow: inset 0 0 0 1px #fff; }
    .mark { position: relative; margin-left: auto; height: 34px; }
    .mark::after { content: ""; position: absolute; inset: -28px -17px -17px -6px; border: 6px solid #fb2013; border-radius: 7px; pointer-events: none; }
    .foot .go { border: 2px solid #3c9ccc; box-shadow: inset 0 0 0 1px #7fd4f5; display: block; }
  `];
  render() {
    const spec = "Add to Project: Yes\nSource Directory: C:\\Users\\Fang\\Xilinx\\half_adder\nSource Type: Verilog Test Fixture\nSource Name: tb_half_adder.v\n\nAssociation: half_adder";
    return html`
      <div class="sheen"></div>
      <button class="close" aria-label="Close"><svg width="18" height="16"><path d="M1 1h5l3 4 3-4h5l-5 7 5 7h-5l-3-4-3 4H1l5-7z" fill="#fff" stroke="#444"/></svg></button>
      <div class="head">
        <button aria-label="Back"><svg width="38" height="38" viewBox="0 0 38 38">
          <defs><radialGradient id="orb" cx=".5" cy="1" r=".9"><stop offset="0" stop-color="#3fd0ff"/><stop offset=".5" stop-color="#1550b8"/><stop offset="1" stop-color="#3f64b8"/></radialGradient></defs>
          <circle cx="19" cy="19" r="17.500" fill="url(#orb)" stroke="#7f93b0" stroke-width="2"/><path d="M4 17a15 14 0 0 1 30 0z" fill="#fff" opacity=".3"/>
          <path d="M9 19l9-8 3 3-3 3h11v4H18l3 3-3 3z" fill="#fff" stroke="#fff" stroke-width="1.500"/></svg></button>
        <h2 class="ui large">New Source Wizard</h2>
      </div>
      <div class="body">
        <h3>Summary</h3>
        <label class="mono" for="spec">Project Navigator will create a new skeleton source with the following specifications.</label>
        <textarea id="spec" readonly .value=${spec}></textarea>
        <div class="foot mono">
          <button>More Info</button>
          <div class="mark"><button class="go">Finish</button></div>
          <button>Cancel</button>
        </div>
      </div>`;
  }
}

/* ---------- bottom dock, language bar and status line ---------- */

@customElement("category-dock")
class CategoryDock extends LitElement {
  static styles = [base, css`
    :host { display: block; flex: none; position: relative; background: #f0f0f0; }
    .groups { display: grid; grid-template-columns: 1fr 1fr; gap: 20px; padding: 0 6px; }
    h2 { margin: 0; height: 32px; padding-top: 4px; text-align: center; font: bold 17px/20px "Liberation Mono", monospace; }
    .cols { display: grid; grid-template-columns: repeat(3, 1fr); gap: 9px; }
    .frame { height: 98px; border: 2px solid #8c94a0; border-width: 2px 1px; background: #fff; }
    table { width: 100%; border-collapse: collapse; table-layout: fixed; }
    th { height: 38px; padding: 0 6px; text-align: left; font-weight: 400; background: linear-gradient(#fff 35%, #f5f7f9 36%, #eff1f4); border-bottom: 1px solid #cfd3d8; }
    th + th { border-left: 1px solid #dfe2e6; }
    th div { display: flex; justify-content: space-between; padding-right: 12px; }
    th svg { margin-top: 5px; }
    td { padding: 1px 0 0; }
    td div { display: flex; align-items: center; height: 28px; gap: 10px; }
    td .twig { margin-right: -6px; }
    .tabs { display: flex; height: 38px; margin-top: 6px; border-top: 2px solid #b5b5b5; padding-left: 3px; align-items: flex-start; }
    .tab { height: 31px; display: flex; align-items: center; gap: 16px; padding: 0 13px 0 6px; border: 1px solid #8c8f94; border-top: 0; border-left-color: #fff; background: linear-gradient(#cdcdcd, #ececec); }
    .tab.on { height: 35px; margin-top: -2px; background: #fff; border-left-color: #8c8f94; padding: 0 12px 0 10px; }
    .line { height: 31px; display: flex; justify-content: space-between; align-items: center; padding: 0 8px 2px; }
    .lang { position: absolute; right: 261px; top: 135px; width: 131px; height: 34px; display: flex; align-items: center; gap: 9px; padding: 0 5px; color: #fff; font: 12px/14px "Liberation Mono", monospace; background: linear-gradient(#b9b9b9, #777 28%, #555b5a 50%, #4c5150); border-top: 1px solid #666; }
  `];
  private head(text: string, down = false) {
    return html`<th><div>${text}<svg width="16" height="8"><path d=${down ? "M0 0h16L8 8z" : "M0 8h16L8 0z"} fill="#9c9c9c"/></svg></div></th>`;
  }
  render() {
    const tabs = [["console", "Console"], ["error", "Errors"], ["warning", "Warnings"], ["find", "Find in Files Results"], ["grid", "View by Category"]];
    return html`
      <dock-caption caption="View by Category"></dock-caption>
      <div class="groups ui">
        <section><h2>Design Objects of Top Level Block</h2>
          <div class="cols">
            <div class="frame"><table><tr>${this.head("Instances")}</tr><tr><td><div><svg class="twig" width="30" height="26"><path d="M16 2v12h13" fill="none" stroke="#999" stroke-dasharray="1 2"/></svg>${ico("instance")}half_adder</div></td></tr></table></div>
            <div class="frame"><table><tr>${this.head("Pins")}</tr></table></div>
            <div class="frame"><table><tr>${this.head("Signals")}</tr></table></div>
          </div>
        </section>
        <section><h2>Properties: (No Selection)</h2>
          <div class="frame"><table><tr>${this.head("Name", true)}<th>Value</th></tr></table></div>
        </section>
      </div>
      <div class="tabs mono">${tabs.map(([i, t], n) => html`<button class=${classMap({ tab: true, on: n === 4 })} aria-current=${n === 4 ? "true" : nothing}>${ico(i)}${t}</button>`)}</div>
      <div class="line ui large"><span>Add a new source to the project</span><span>[-284,348]</span></div>
      <div class="lang">
        <svg width="14" height="26"><path d="M0 4h14M0 14h14M0 24h14" stroke="#111" stroke-width="4" stroke-dasharray="3 2"/></svg><span>CH</span>
        <svg width="22" height="26"><rect x="1" y="11" width="20" height="12" fill="#aaa" stroke="#ddd"/><path d="M4 15h14M4 19h14" stroke="#444" stroke-dasharray="2 1"/><path d="M3 9l4-4 6 2 5-5" stroke="#222" fill="none"/></svg>
        <svg width="24" height="26"><circle cx="12" cy="13" r="10" fill="#0c1ec0" stroke="#ccc" stroke-width="2"/><path d="M8.500 10c0-5 7-5 7 0 0 3-3.500 2.500-3.500 5.500" fill="none" stroke="#fff" stroke-width="2.200"/><circle cx="12" cy="18.500" r="1.500" fill="#fff"/></svg>
        <svg width="8" height="26"><path d="M1 4h6v2H1zM1 18h6l-3 4z" fill="#fff"/></svg>
      </div>`;
  }
}

/* ---------- taskbar ---------- */

@customElement("task-bar")
class TaskBar extends LitElement {
  static styles = [base, css`
    :host { display: flex; flex: none; height: 56px; position: relative; align-items: stretch; color: #fff; overflow: hidden; border-top: 1px solid #123a5c; box-shadow: inset 0 2px rgba(255, 255, 255, .35);
      background: linear-gradient(90deg, #1c6299, #2482c0 7%, #2f95cf 15%, #43a3d7 23%, #3a9ad3 34%, #2a85c6 45%, #2277c0 58%, #1f70bb 72%, #1b5ba4 87%, #1a5496 89%, #133a68 91%, #123560); }
    .glow { position: absolute; inset: 0; width: 100%; height: 100%; }
    .apps { display: flex; position: relative; align-items: center; padding-left: 14px; }
    .apps button { display: grid; place-items: center; height: 100%; width: 76px; }
    .apps button:first-child { width: 52px; margin-right: 20px; }
    .apps .run { margin-left: 6px; border: 1px solid #fff; outline: 1px solid #1d3a55; outline-offset: -2px; border-radius: 3px; background: linear-gradient(135deg, #d8edf8, #7fbde0 60%, #aedcf2); }
    .tray { margin-left: auto; display: flex; position: relative; align-items: center; gap: 12px; }
    .up { margin-right: 11px; }
    .clock { display: grid; justify-items: center; line-height: 24px; width: 112px; padding-top: 3px; margin-right: 2px; }
    .tray .ico { margin-top: -3px; }
    .show { width: 14px; height: 100%; border: 1px solid #5d7ea6; background: linear-gradient(#5a7ba3, #1a3c68 60%); margin-left: -12px; }
    .stamp { position: absolute; right: 16px; top: 24px; font: 19px/24px "Noto Sans", "Noto Sans CJK SC", "DejaVu Sans", sans-serif; color: rgba(225, 230, 238, .75); white-space: nowrap; }
  `];
  render() {
    return html`
      <svg class="glow" viewBox="0 0 2880 56" preserveAspectRatio="none">
        <defs><filter id="soft" x="-20%" y="-20%" width="140%" height="140%"><feGaussianBlur stdDeviation="3"/></filter></defs>
        <g filter="url(#soft)" fill="none">
          <path d="M20 60L120-4" stroke="#8cc4e8" stroke-width="8" opacity=".5"/><path d="M230 60L270-4" stroke="#d2e868" stroke-width="8" opacity=".55"/><path d="M150 60L185-4" stroke="#7fc0ea" stroke-width="7" opacity=".6"/>
          <path d="M560 60Q760-10 1000 30T1500-6" stroke="#8ac8ee" stroke-width="6" opacity=".35"/><path d="M1100 60L1290-4" stroke="#a4d4f2" stroke-width="8" opacity=".5"/>
          <path d="M910-4Q940 30 950 60" stroke="#6bb8e2" stroke-width="16" opacity=".4"/><path d="M1935-6Q2000 14 2044 64" stroke="#bcdcff" stroke-width="18"/>
        </g>
      </svg>
      <div class="apps">
        <button aria-label="Start"><svg width="52" height="52" viewBox="0 0 52 52"><defs><radialGradient id="w" cx=".5" cy="1" r="1"><stop offset="0" stop-color="#3fe6ff"/><stop offset=".4" stop-color="#1582c4"/><stop offset="1" stop-color="#5b7f9c"/></radialGradient></defs>
          <circle cx="26" cy="26" r="24.500" fill="url(#w)" stroke="#23415c" stroke-width="2"/><path d="M4 22a22 20 0 0 1 44 0q-22 6-44 0z" fill="#fff" opacity=".35"/>
          <path d="M16 11q6-4 11-1l-3 13q-6-3-11 1z" fill="#ec5c28"/><path d="M29 11q6 4 13 0l-4 13q-6 3-12 0z" fill="#8cc63f"/><path d="M12 26q6-4 11-1l-3 13q-5-3-11 0z" fill="#52a8e8"/><path d="M25 26q6 4 12 0l-3 13q-6 3-12 0z" fill="#fbc02d"/></svg></button>
        <button aria-label="Internet Explorer"><svg width="50" height="50" viewBox="0 0 50 50"><path d="M45 30H20c1 10 13 11 16 3h9c-4 17-36 17-37-5C7 1 48-1 45 30zM20 22h15c-1-9-14-9-15 0z" fill="#2483dc" stroke="#0d3f80" stroke-width="1.600"/><path d="M47 12C50 0 38 0 22 13 8 25 1 41 5 46c3 4 10 2 16-3" fill="none" stroke="#f6b91a" stroke-width="3.600"/></svg></button>
        <button aria-label="Explorer"><svg width="50" height="50" viewBox="0 0 50 50"><path d="M4 9l3-7h10l3 3h10l3 4h12v3H4z" fill="#f3dc88" stroke="#b89438"/><path d="M9 4h7v4H9zM21 6h7v4h-7zM33 9h9v4h-9z" fill="#fff"/><path d="M10 4h3v3h-3z" fill="#2a9a3a"/><path d="M21 7h3v3h-3z" fill="#e03030"/><path d="M34 10h3v3h-3z" fill="#2a86c8"/><path d="M3 12h25l3 3h16v31H3z" fill="#f6e08e" stroke="#c9a545"/><path d="M8 47V31q0-3 3-3h28q3 0 3 3v16h-9v-9H17v9z" fill="#a8dcf2" stroke="#5aa6cc"/></svg></button>
        <button aria-label="Media Player"><svg width="42" height="44" viewBox="0 0 42 44"><path d="M8 5h32v36H8z" fill="#7fb5d6" stroke="#4f88ac"/><path d="M5 4h31v37H5z" fill="#a8d2ea" stroke="#4f88ac"/><path d="M2 4h30v38L2 38z" fill="#b9def2" stroke="#6fa8c8"/><ellipse cx="17" cy="21" rx="13" ry="14" fill="#f2752a"/><path d="M11 12l15 9-15 9z" fill="#fff"/></svg></button>
        <button class="run" aria-label="ISE Project Navigator"><svg width="50" height="46" viewBox="0 0 50 46"><path d="M1 1h28l19 21H21z" fill="#d9dc55"/><path d="M1 45h27l20-23H21z" fill="#8c8c08"/></svg></button>
      </div>
      <div class="tray ui">
        <svg class="up" width="10" height="8"><path d="M0 8h10L5 0z" fill="#fff"/></svg>
        ${ico("flag")}${ico("network")}${ico("speaker")}
        <div class="clock"><span>17:43</span><span>2023/5/2</span></div>
        <button class="show" aria-label="Show desktop"></button>
      </div>
      <div class="stamp">CSDN @世界上的另一个我(▯_▯)</div>`;
  }
}

/* ---------- root ---------- */

@customElement("app-root")
class AppRoot extends LitElement {
  static styles = css`
    :host { display: flex; flex-direction: column; min-height: 100vh; position: relative; background: #f0f0f0; color: #111; overflow: hidden; }
    main { flex: 1; display: flex; min-height: 0; }
  `;
  render(): TemplateResult {
    return html`
      <app-header></app-header>
      <main><design-panel></design-panel><schematic-view></schematic-view></main>
      <category-dock></category-dock>
      <task-bar></task-bar>
      <source-wizard></source-wizard>`;
  }
}
